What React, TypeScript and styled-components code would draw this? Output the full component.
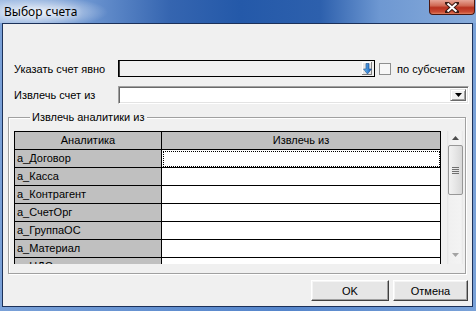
import React from 'react';
import styled, { createGlobalStyle } from 'styled-components';

const rows = ['а_Договор', 'а_Касса', 'а_Контрагент', 'а_СчетОрг', 'а_ГруппаОС', 'а_Материал', 'а_НДС'];

const App = () => {
  return (
    <>
      <GlobalStyle />
      <Window>
        <TitleBar>
          <Title>Выбор счета</Title>
          <CloseBtn>
            <svg width="14" height="11" viewBox="0 0 14 11">
              <path d="M2 1 L12 10 M12 1 L2 10" stroke="#3a1a14" strokeWidth="4" strokeLinecap="square" />
              <path d="M2.5 1.5 L11.5 9.5 M11.5 1.5 L2.5 9.5" stroke="#fff" strokeWidth="2" />
            </svg>
          </CloseBtn>
        </TitleBar>
        <Client>
          <FieldRow>
            <Label>Указать счет явно</Label>
            <AccountBox>
              <AccountBtn>
                <svg width="9" height="12" viewBox="0 0 9 12">
                  <defs>
                    <linearGradient id="ar" x1="0" y1="0" x2="1" y2="0">
                      <stop offset="0" stopColor="#6cc0f5" />
                      <stop offset="1" stopColor="#1459b8" />
                    </linearGradient>
                  </defs>
                  <path d="M3 0.5 H6 V6 H8.5 L4.5 11 L0.5 6 H3 Z" fill="url(#ar)" stroke="#1d4f8f" strokeWidth="0.6" />
                </svg>
              </AccountBtn>
            </AccountBox>
            <CheckBox />
            <CheckText>по субсчетам</CheckText>
          </FieldRow>
          <FieldRow $gap={9}>
            <Label>Извлечь счет из</Label>
            <Combo>
              <DropBtn>
                <svg width="7" height="4" viewBox="0 0 7 4">
                  <path d="M0 0 H7 L3.5 4 Z" fill="#000" />
                </svg>
              </DropBtn>
            </Combo>
          </FieldRow>
          <GroupBox>
            <Caption>Извлечь аналитики из</Caption>
            <Grid>
              <HeadCell>Аналитика</HeadCell>
              <HeadCell>Извлечь из</HeadCell>
              {rows.map((r, i) => (
                <React.Fragment key={r}>
                  <FixedCell>{r}</FixedCell>
                  <Cell $focused={i === 0} />
                </React.Fragment>
              ))}
            </Grid>
            <ScrollBar>
              <svg width="7" height="4" viewBox="0 0 7 4"><path d="M0 4 H7 L3.5 0 Z" fill="#4d4d4d" /></svg>
              <Thumb>
                <Grip />
              </Thumb>
              <svg width="7" height="4" viewBox="0 0 7 4"><path d="M0 0 H7 L3.5 4 Z" fill="#a3a3a3" /></svg>
            </ScrollBar>
          </GroupBox>
          <ButtonRow>
            <Btn $w={78}>OK</Btn>
            <Btn $w={75}>Отмена</Btn>
          </ButtonRow>
        </Client>
      </Window>
    </>
  );
};

const GlobalStyle = createGlobalStyle`
  html, body {
    margin: 0;
    width: 476px;
    height: 311px;
    overflow: hidden;
  }
  body {
    font-family: "Liberation Sans", Arial, sans-serif;
    font-size: 11px;
    color: #000;
  }
`;

const Window = styled.div`
  width: 476px;
  height: 311px;
  display: flex;
  flex-direction: column;
  background: linear-gradient(90deg, #7aa1d8 0%, #5f8dcf 40%, #5585cb 60%, #7aa2d8 100%);
`;

const TitleBar = styled.div`
  height: 23px;
  display: flex;
  justify-content: space-between;
  align-items: flex-start;
  padding: 0 1px 0 4px;
  background:
    radial-gradient(ellipse 70px 16px at 38px 12px, rgba(255, 255, 255, 0.85), rgba(255, 255, 255, 0) 100%),
    linear-gradient(90deg, #9ab8e2 0px, #6a93cf 90px, #3565b0 170px, #2459a9 240px, #2d60ad 320px, #6e98d2 380px, #88acdb 476px);
`;

const Title = styled.div`
  font-family: "Noto Sans", "Open Sans", sans-serif;
  font-size: 12px;
  line-height: 23px;
  color: #000;
  text-shadow: 0 0 6px #fff;
`;

const CloseBtn = styled.div`
  width: 46px;
  height: 15px;
  box-sizing: border-box;
  border: 1px solid #4a1710;
  border-top: none;
  border-radius: 0 0 4px 4px;
  background: linear-gradient(180deg, #e7a596 0%, #d06a55 40%, #b8321f 55%, #c94a33 85%, #e08060 100%);
  display: flex;
  align-items: center;
  justify-content: center;
`;

const Client = styled.div`
  flex: 1;
  margin: 0 3px 4px 2px;
  border: 1px solid #1c3159;
  background: #f0f0f0;
  padding: 36px 0 0 5px;
  display: flex;
  flex-direction: column;
`;

const FieldRow = styled.div<{ $gap?: number }>`
  display: flex;
  align-items: center;
  padding-left: 6px;
  margin-top: ${p => p.$gap ?? 0}px;
`;

const Label = styled.div`
  width: 104px;
  white-space: nowrap;
`;

const AccountBox = styled.div`
  width: 257px;
  height: 17px;
  box-sizing: border-box;
  border: 1px solid #000;
  box-shadow: inset 1px 0 0 #404040;
  background: #f0f0f0;
  display: flex;
  justify-content: flex-end;
  align-items: center;
  padding-right: 2px;
`;

const AccountBtn = styled.div`
  width: 10px;
  height: 13px;
  background: #e6e6e6;
  box-shadow: inset -1px -1px 0 #808080, inset 1px 1px 0 #fff;
  display: flex;
  align-items: center;
  justify-content: center;
`;

const CheckBox = styled.div`
  width: 12px;
  height: 12px;
  box-sizing: border-box;
  margin-left: 4px;
  border: 1px solid #8e8f8f;
  background: #f7f7f7;
`;

const CheckText = styled.div`
  margin-left: 6px;
`;

const Combo = styled.div`
  width: 351px;
  height: 18px;
  box-sizing: border-box;
  border-top: 1px solid #a0a0a0;
  border-left: 1px solid #a0a0a0;
  border-right: 1px solid #fff;
  border-bottom: 1px solid #fff;
  box-shadow: inset 1px 1px 0 #696969, inset -1px -1px 0 #e3e3e3;
  background: #fff;
  display: flex;
  justify-content: flex-end;
  align-items: stretch;
  padding: 2px;
`;

const DropBtn = styled.div`
  width: 16px;
  box-sizing: border-box;
  background: #f0f0f0;
  border-top: 1px solid #e3e3e3;
  border-left: 1px solid #e3e3e3;
  border-right: 1px solid #696969;
  border-bottom: 1px solid #696969;
  box-shadow: inset 1px 1px 0 #fff, inset -1px -1px 0 #a0a0a0;
  display: flex;
  align-items: center;
  justify-content: center;
`;

const GroupBox = styled.div`
  position: relative;
  width: 458px;
  height: 157px;
  box-sizing: border-box;
  margin-top: 13px;
  border: 1px solid #a0a0a0;
  box-shadow: inset 1px 1px 0 #fff, 1px 1px 0 #fff;
  padding: 13px 0 0 5px;
  display: flex;
  align-items: flex-start;
  gap: 6px;
`;

const Caption = styled.div`
  position: absolute;
  top: -7px;
  left: 21px;
  padding: 0 2px;
  background: #f0f0f0;
  line-height: 13px;
`;

const Grid = styled.div`
  width: 427px;
  height: 133px;
  box-sizing: border-box;
  overflow: hidden;
  display: grid;
  grid-template-columns: 147px 279px;
  grid-auto-rows: 18px;
  border-left: 1px solid #000;
  border-top: 1px solid #000;
  align-content: start;
`;

const CellBase = styled.div`
  box-sizing: border-box;
  border-right: 1px solid #000;
  border-bottom: 1px solid #000;
  line-height: 17px;
  white-space: nowrap;
  overflow: hidden;
`;

const HeadCell = styled(CellBase)`
  background: #c0c0c0;
  text-align: center;
`;

const FixedCell = styled(CellBase)`
  background: #c0c0c0;
  padding-left: 2px;
`;

const Cell = styled(CellBase)<{ $focused?: boolean }>`
  background: #fff;
  outline: ${p => (p.$focused ? '1px dotted #000' : 'none')};
  outline-offset: -2px;
`;

const ScrollBar = styled.div`
  width: 16px;
  height: 133px;
  box-sizing: border-box;
  background: linear-gradient(90deg, #e3e3e3 0, #f0f0f0 2px, #f3f3f3 14px, #e6e6e6 16px);
  display: flex;
  flex-direction: column;
  align-items: center;
  justify-content: space-between;
  padding: 5px 0 7px;
  svg {
    flex: none;
  }
`;

const Thumb = styled.div`
  width: 15px;
  height: 50px;
  box-sizing: border-box;
  margin: 5px 0 auto;
  border: 1px solid #979797;
  border-radius: 2px;
  background: linear-gradient(90deg, #f2f2f2 0%, #e6e6e6 50%, #d8d8d8 100%);
  display: flex;
  align-items: center;
  justify-content: center;
`;

const Grip = styled.div`
  width: 7px;
  height: 7px;
  background: repeating-linear-gradient(180deg, #6f6f6f 0, #6f6f6f 1px, transparent 1px, transparent 2px);
`;

const ButtonRow = styled.div`
  display: flex;
  justify-content: flex-end;
  gap: 4px;
  margin-top: 6px;
  padding-right: 4px;
`;

const Btn = styled.button<{ $w: number }>`
  width: ${p => p.$w}px;
  height: 21px;
  padding: 0;
  font: inherit;
  color: #000;
  background: #e6e6e6;
  border-top: 1px solid #fff;
  border-left: 1px solid #fff;
  border-right: 1px solid #404040;
  border-bottom: 1px solid #404040;
  box-shadow: inset -1px -1px 0 #a0a0a0, inset 1px 1px 0 #f4f4f4;
`;

export default App;
